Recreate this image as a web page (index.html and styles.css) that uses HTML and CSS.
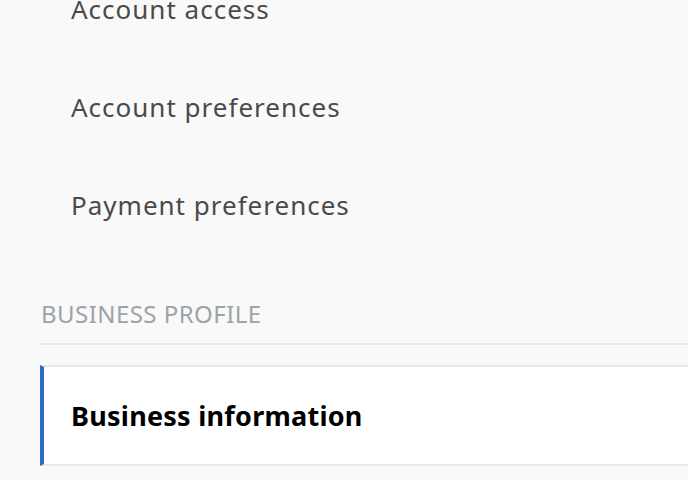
FILE: index.html
```html
<!DOCTYPE html>
<html lang="en">
<head>
<meta charset="utf-8">
<title>Settings</title>
<link rel="stylesheet" href="styles.css">
</head>
<body>
<nav class="sidebar">
  <ul class="nav-list">
    <li class="nav-item">Account access</li>
    <li class="nav-item">Account preferences</li>
    <li class="nav-item">Payment preferences</li>
  </ul>
  <h2 class="section-title">BUSINESS PROFILE</h2>
  <ul class="section-list">
    <li class="section-item active">Business information</li>
  </ul>
</nav>
</body>
</html>
```
FILE: styles.css
```css
html, body {
  margin: 0;
  padding: 0;
  background: #f9f9f9;
}
body {
  font-family: "Noto Sans", "Open Sans", sans-serif;
  width: 688px;
  height: 480px;
  overflow: hidden;
}
.sidebar {
  margin-top: -40px;
  padding-left: 40px;
}
.nav-list, .section-list {
  list-style: none;
  margin: 0;
  padding: 0;
}
.nav-item {
  height: 98px;
  line-height: 98px;
  padding-left: 31px;
  font-size: 26px;
  letter-spacing: 1px;
  color: #4a4a4a;
}
.section-title {
  margin: 0;
  padding: 46px 0 15px 1px;
  line-height: 28px;
  font-size: 24px;
  font-weight: 400;
  letter-spacing: 0.45px;
  color: #9da3a7;
  border-bottom: 2px solid #e8e8e8;
}
.section-list {
  margin-top: 20px;
}
.section-item {
  height: 97px;
  line-height: 97px;
  background: #fff;
  border-top: 2px solid #e8e8e8;
  border-bottom: 2px solid #e8e8e8;
  border-left: 4px solid #2d6bbd;
  padding-left: 27px;
  font-size: 27px;
  font-weight: 700;
  letter-spacing: 0.25px;
  color: #000;
}
```
